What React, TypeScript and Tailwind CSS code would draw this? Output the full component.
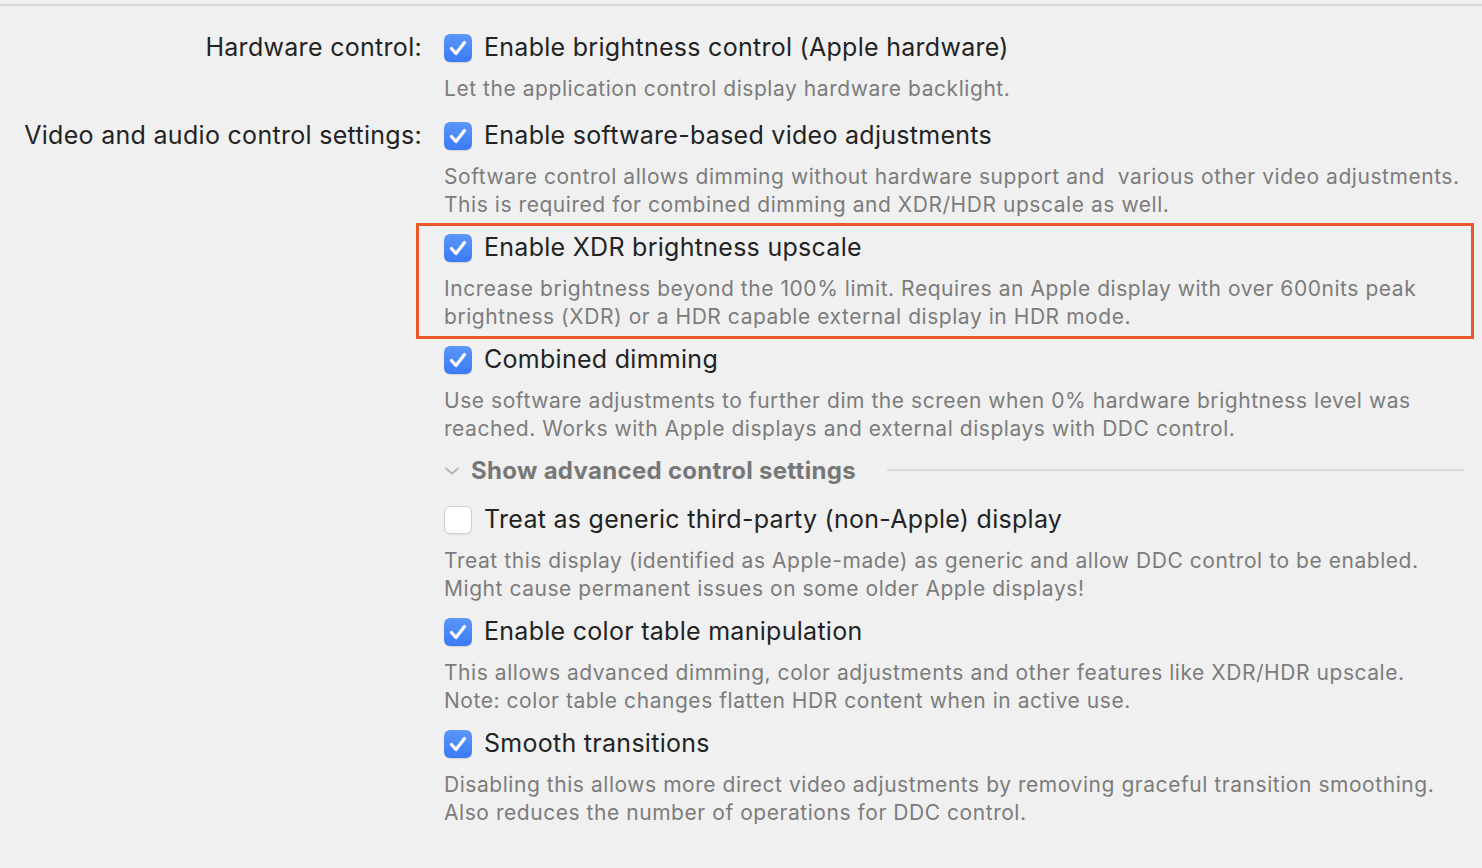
import React from 'react';

type Item = {
  title: string;
  desc: string[];
  checked: boolean;
  highlight?: boolean;
};

const hardwareItems: Item[] = [
  {
    title: 'Enable brightness control (Apple hardware)',
    desc: ['Let the application control display hardware backlight.'],
    checked: true,
  },
];

const videoItems: Item[] = [
  {
    title: 'Enable software-based video adjustments',
    desc: [
      'Software control allows dimming without hardware support and  various other video adjustments.',
      'This is required for combined dimming and XDR/HDR upscale as well.',
    ],
    checked: true,
  },
  {
    title: 'Enable XDR brightness upscale',
    desc: [
      'Increase brightness beyond the 100% limit. Requires an Apple display with over 600nits peak',
      'brightness (XDR) or a HDR capable external display in HDR mode.',
    ],
    checked: true,
    highlight: true,
  },
  {
    title: 'Combined dimming',
    desc: [
      'Use software adjustments to further dim the screen when 0% hardware brightness level was',
      'reached. Works with Apple displays and external displays with DDC control.',
    ],
    checked: true,
  },
];

const advancedItems: Item[] = [
  {
    title: 'Treat as generic third-party (non-Apple) display',
    desc: [
      'Treat this display (identified as Apple-made) as generic and allow DDC control to be enabled.',
      'Might cause permanent issues on some older Apple displays!',
    ],
    checked: false,
  },
  {
    title: 'Enable color table manipulation',
    desc: [
      'This allows advanced dimming, color adjustments and other features like XDR/HDR upscale.',
      'Note: color table changes flatten HDR content when in active use.',
    ],
    checked: true,
  },
  {
    title: 'Smooth transitions',
    desc: [
      'Disabling this allows more direct video adjustments by removing graceful transition smoothing.',
      'Also reduces the number of operations for DDC control.',
    ],
    checked: true,
  },
];

function Checkbox({ checked }: { checked: boolean }) {
  if (!checked) {
    return (
      <div className="w-[28px] h-[28px] shrink-0 rounded-[6px] bg-white border border-[#cfcfcf] shadow-[0_1px_1px_rgba(0,0,0,0.06)]" />
    );
  }
  return (
    <div className="w-[28px] h-[28px] shrink-0 rounded-[6px] bg-gradient-to-b from-[#5b96f9] to-[#3a7bf5] flex items-center justify-center shadow-[0_1px_1px_rgba(0,0,0,0.12)]">
      <svg width="28" height="28" viewBox="0 0 28 28" fill="none">
        <path
          d="M7.5 14.5 L12 19.5 L20.5 8.5"
          stroke="white"
          strokeWidth={3.2}
          strokeLinecap="round"
          strokeLinejoin="round"
        />
      </svg>
    </div>
  );
}

function SettingItem({ item }: { item: Item }) {
  return (
    <div className="relative pb-[15px]">
      {item.highlight && (
        <div className="absolute top-[-11px] left-[-28px] right-[8px] bottom-[7px] border-[3px] border-[#ea5828] pointer-events-none" />
      )}
      <div className="h-[28px] flex items-center gap-[12px]">
        <Checkbox checked={item.checked} />
        <span className="text-[25px] tracking-[0.28px] text-[#232323] whitespace-nowrap">{item.title}</span>
      </div>
      <div className="mt-[13px] text-[21px] leading-[28px] text-[#7c7c7c] whitespace-pre tracking-[0.55px]">
        {item.desc.map((line, i) => (
          <div key={i}>{line}</div>
        ))}
      </div>
    </div>
  );
}

export default function App() {
  return (
    <div className="min-h-screen bg-[#f0f0f0] font-['Inter','Noto_Sans',sans-serif] antialiased">
      <div className="h-[4px]" />
      <div className="h-[2px] bg-[#d7d7d7]" />

      <div className="pt-[28px] grid grid-cols-[422px_1fr] gap-x-[22px]">
        <div className="h-[28px] flex items-center justify-end text-[25px] tracking-[0.3px] text-[#232323] whitespace-nowrap">
          Hardware control:
        </div>
        <div>
          {hardwareItems.map((item) => (
            <SettingItem key={item.title} item={item} />
          ))}
        </div>

        <div className="mt-[4px] h-[28px] flex items-center justify-end text-[25px] tracking-[0.3px] text-[#232323] whitespace-nowrap">
          Video and audio control settings:
        </div>
        <div className="mt-[4px]">
          {videoItems.map((item) => (
            <SettingItem key={item.title} item={item} />
          ))}

          <div className="h-[26px] flex items-center pr-[18px]">
            <svg width="16" height="10" viewBox="0 0 16 10" fill="none" className="shrink-0">
              <path d="M2 2.5 L8 7.5 L14 2.5" stroke="#b5b5b5" strokeWidth={1.8} strokeLinecap="round" strokeLinejoin="round" />
            </svg>
            <span className="ml-[11px] text-[24px] tracking-[0.3px] font-bold text-[#777777] whitespace-nowrap">
              Show advanced control settings
            </span>
            <div className="ml-[31px] mt-[-3px] flex-1 h-[2px] bg-[#d9d9d9]" />
          </div>

          <div className="mt-[22px]">
            {advancedItems.map((item) => (
              <SettingItem key={item.title} item={item} />
            ))}
          </div>
        </div>
      </div>
    </div>
  );
}
